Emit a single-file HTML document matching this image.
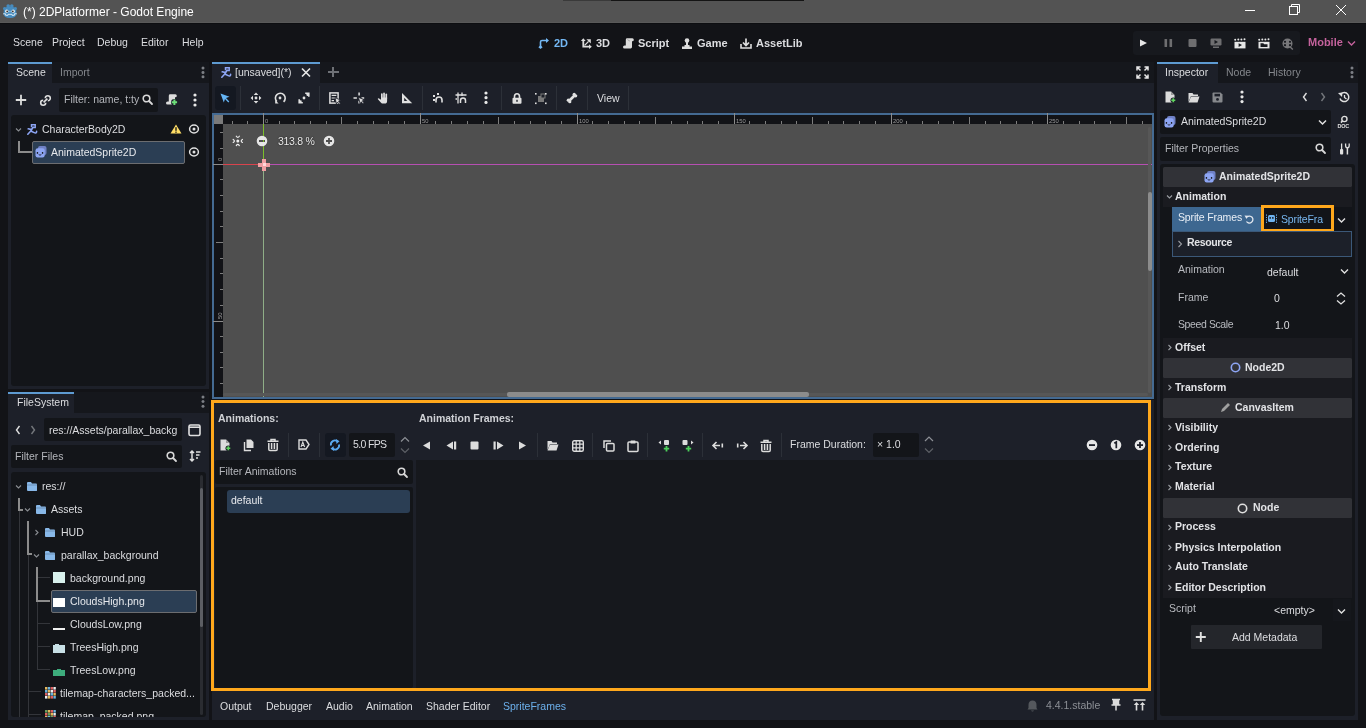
<!DOCTYPE html>
<html><head><meta charset="utf-8">
<style>
*{margin:0;padding:0;box-sizing:border-box}
html,body{width:1366px;height:728px;overflow:hidden;background:#121317;font-family:"Liberation Sans",sans-serif;font-size:10.5px;color:#dcdde0}
.a{position:absolute}
.t{position:absolute;white-space:nowrap;line-height:1;will-change:transform}
svg{position:absolute;overflow:visible;will-change:transform}
</style></head><body>
<div class="a" style="left:0px;top:0px;width:1366px;height:23px;background:#535353;"></div>
<div class="a" style="left:0px;top:22px;width:1366px;height:1px;background:#595959;"></div>
<div class="a" style="left:0px;top:23px;width:1366px;height:1px;background:#0d0e11;"></div>
<div class="a" style="left:563px;top:0px;width:48px;height:1px;background:#3a3a3a;"></div>
<div class="a" style="left:611px;top:0px;width:193px;height:1px;background:#141414;"></div>
<svg style="left:3px;top:4px;" width="14" height="14" viewBox="0 0 14 14"><circle cx="5.2" cy="2" r="1.8" fill="#478cbf"/><circle cx="8.8" cy="2" r="1.8" fill="#478cbf"/><circle cx="1.5" cy="4.5" r="1.5" fill="#478cbf"/><circle cx="12.5" cy="4.5" r="1.5" fill="#478cbf"/><path d="M1 4 Q7 1.5 13 4 L13.5 10 Q13 14 7 14 Q1 14 0.5 10 Z" fill="#478cbf"/><circle cx="3.8" cy="7.2" r="1.7" fill="#e8eef2"/><circle cx="10.2" cy="7.2" r="1.7" fill="#e8eef2"/><circle cx="4.2" cy="7.4" r=".9" fill="#3a3430"/><circle cx="9.8" cy="7.4" r=".9" fill="#3a3430"/><circle cx="7" cy="7.5" r=".8" fill="#9cc4e4"/><path d="M0.2 9.8 H2.6 V11.3 H5 V10.3 H9 V11.3 H11.4 V9.8 H13.8" fill="none" stroke="#d8e8f4" stroke-width="1"/></svg>
<div class="t" style="left:23px;top:6.04px;font-size:12px;color:#ffffff;">(*) 2DPlatformer - Godot Engine</div>
<div class="a" style="left:1245px;top:10px;width:10px;height:1px;background:#ffffff;"></div>
<svg style="left:1289px;top:4px;" width="12" height="12" viewBox="0 0 12 12"><path d="M2.5 2.5 V0.5 H10.5 V8.5 H9" fill="none" stroke="#fff" stroke-width="1"/><rect x="0.5" y="2.5" width="8" height="8" fill="none" stroke="#fff" stroke-width="1"/></svg>
<svg style="left:1335px;top:4px;" width="12" height="12" viewBox="0 0 12 12"><path d="M1 1 L11 11 M11 1 L1 11" stroke="#fff" stroke-width="1"/></svg>
<div class="t" style="left:13px;top:37.21px;font-size:10.5px;color:#dcdde0;">Scene</div>
<div class="t" style="left:52px;top:37.21px;font-size:10.5px;color:#dcdde0;">Project</div>
<div class="t" style="left:97px;top:37.21px;font-size:10.5px;color:#dcdde0;">Debug</div>
<div class="t" style="left:141px;top:37.21px;font-size:10.5px;color:#dcdde0;">Editor</div>
<div class="t" style="left:182px;top:37.21px;font-size:10.5px;color:#dcdde0;">Help</div>
<svg style="left:538px;top:38px;" width="12" height="11" viewBox="0 0 12 11"><path d="M2.5 9 V4 Q2.5 2.5 4 2.5 H9.5" fill="none" stroke="#74b8f4" stroke-width="1.6"/><path d="M8 0 L11 2.5 L8 5 Z" fill="#74b8f4"/><path d="M2.5 7.2 L4.6 9.3 L2.5 11 L0.4 9.3 Z" fill="#74b8f4"/></svg>
<div class="t" style="left:553.5px;top:38.29px;font-size:11px;color:#74b8f4;font-weight:bold;">2D</div>
<svg style="left:580.5px;top:37.5px;" width="11" height="11" viewBox="0 0 11 11"><path d="M2.3 2.5 V8.7 H8.5" fill="none" stroke="#dcdcdc" stroke-width="1.8"/><path d="M2.3 0.2 L4.7 3 H-0.1 Z M10.8 8.7 L8 11.1 V6.3 Z M9.8 1.2 V5.6 L5.4 1.2 Z" fill="#dcdcdc"/><path d="M3.6 7.4 L7.6 3.4" stroke="#dcdcdc" stroke-width="1.3"/></svg>
<div class="t" style="left:595.5px;top:38.29px;font-size:11px;color:#dcdde0;font-weight:bold;">3D</div>
<svg style="left:622.5px;top:37.8px;" width="11" height="11" viewBox="0 0 11 11"><path d="M4.2 0.3 H9.4 Q10.8 0.3 10.8 1.8 Q10.8 3.3 9.3 3.3 H9 V9 Q9 10.4 7.6 10.4 H1.5 Q0 10.4 0 8.9 Q0 7.4 1.5 7.4 H2.8 V1.7 Q2.8 0.3 4.2 0.3 Z" fill="#dcdcdc"/><path d="M4.6 1.2 Q5 3 7 3" fill="none" stroke="#9a9a9a" stroke-width=".7"/></svg>
<div class="t" style="left:637.5px;top:38.29px;font-size:11px;color:#dcdde0;font-weight:bold;">Script</div>
<svg style="left:681px;top:38px;" width="12" height="11" viewBox="0 0 12 11"><circle cx="6" cy="2.5" r="2.3" fill="#dcdcdc"/><rect x="5" y="4" width="2" height="4" fill="#dcdcdc"/><path d="M3.5 7 H8.5 V8.5 H11 V11 H1 V8.5 H3.5 Z" fill="#dcdcdc"/></svg>
<div class="t" style="left:697px;top:38.29px;font-size:11px;color:#dcdde0;font-weight:bold;">Game</div>
<svg style="left:740px;top:38px;" width="12" height="11" viewBox="0 0 12 11"><path d="M6 0.5 V7 M3 4.5 L6 7.5 L9 4.5" fill="none" stroke="#dcdcdc" stroke-width="1.7"/><path d="M1 6 V10 H11 V6" fill="none" stroke="#dcdcdc" stroke-width="1.6"/></svg>
<div class="t" style="left:755.5px;top:38.29px;font-size:11px;color:#dcdde0;font-weight:bold;">AssetLib</div>
<div class="a" style="left:1133px;top:31px;width:167px;height:24px;background:#17191e;border-radius:3px"></div>
<svg style="left:1139px;top:39px;" width="9" height="8" viewBox="0 0 9 8"><path d="M1 0.5 L8 4 L1 7.5 Z" fill="#e6e6e6"/></svg>
<svg style="left:1164px;top:39px;" width="9" height="8" viewBox="0 0 9 8"><rect x="0.5" y="0" width="2.6" height="8" rx=".6" fill="#6e6e70"/><rect x="5.5" y="0" width="2.6" height="8" rx=".6" fill="#6e6e70"/></svg>
<svg style="left:1188px;top:39px;" width="9" height="8" viewBox="0 0 9 8"><rect x="0.5" y="0" width="8" height="8" rx="1" fill="#6e6e70"/></svg>
<svg style="left:1210px;top:38px;" width="12" height="10" viewBox="0 0 12 10"><rect x="0.5" y="0.5" width="11" height="7" rx="1.2" fill="#6e6e70"/><path d="M4.5 2 L8 4 L4.5 6 Z" fill="#17191e"/><rect x="3" y="8.5" width="6" height="1.5" fill="#6e6e70"/></svg>
<svg style="left:1234px;top:38px;" width="12" height="11" viewBox="0 0 12 11"><circle cx="1.2" cy="1.8" r="1" fill="#e6e6e6"/><circle cx="4.3" cy="1.5" r="1" fill="#e6e6e6"/><circle cx="7.4" cy="1.5" r="1" fill="#e6e6e6"/><circle cx="10.5" cy="1.2" r="1" fill="#e6e6e6"/><rect x="0.5" y="3.8" width="11" height="6.6" fill="#e6e6e6"/><path d="M4.6 5.3 L8 7.1 L4.6 8.9 Z" fill="#17191e"/></svg>
<svg style="left:1258px;top:38px;" width="12" height="11" viewBox="0 0 12 11"><circle cx="1.2" cy="1.8" r="1" fill="#e6e6e6"/><circle cx="4.3" cy="1.5" r="1" fill="#e6e6e6"/><circle cx="7.4" cy="1.5" r="1" fill="#e6e6e6"/><circle cx="10.5" cy="1.2" r="1" fill="#e6e6e6"/><rect x="0.5" y="3.8" width="11" height="6.6" fill="#e6e6e6"/><path d="M2.5 5.2 H5.3 L6.2 6.2 H9.5 V9 H2.5 Z" fill="#17191e"/></svg>
<svg style="left:1282px;top:38px;" width="12" height="12" viewBox="0 0 12 12"><circle cx="5.5" cy="5.5" r="5" fill="#77777a"/><circle cx="3" cy="3.8" r="1.1" fill="#17191e"/><circle cx="3" cy="7.2" r="1.1" fill="#17191e"/><circle cx="8" cy="3.8" r="1.1" fill="#17191e"/><circle cx="8" cy="7.2" r="1.1" fill="#17191e"/><path d="M8.2 9 L10.8 11.6" stroke="#77777a" stroke-width="1.4"/></svg>
<div class="t" style="left:1307.5px;top:37.29px;font-size:11px;color:#c4629c;font-weight:bold;">Mobile</div>
<svg style="left:1346.5px;top:40px;" width="9" height="6" viewBox="0 0 9 6"><path d="M1 1.5 L4.5 5.0 L8 1.5" fill="none" stroke="#c4629c" stroke-width="1.4"/></svg>
<div class="a" style="left:8px;top:62px;width:201px;height:21px;background:#15171c;"></div>
<div class="a" style="left:8px;top:62px;width:44px;height:21px;background:#1d2029;"></div>
<div class="a" style="left:8px;top:62px;width:44px;height:2px;background:#5e9bd2;"></div>
<div class="t" style="left:16px;top:67.41px;font-size:10.5px;color:#dcdde0;">Scene</div>
<div class="t" style="left:60px;top:67.41px;font-size:10.5px;color:#84878c;">Import</div>
<svg style="left:200px;top:64.6px;" width="6" height="14.8" viewBox="0 0 6 14.8"><circle cx="3" cy="3.0" r="1.5" fill="#7c7f85"/><circle cx="3" cy="7.4" r="1.5" fill="#7c7f85"/><circle cx="3" cy="11.8" r="1.5" fill="#7c7f85"/></svg>
<div class="a" style="left:8px;top:83px;width:201px;height:306px;background:#1d2029;"></div>
<svg style="left:15px;top:94px;" width="12" height="12" viewBox="0 0 12 12"><path d="M0.8 6 H11.2 M6 0.8 V11.2" stroke="#dcdcdc" stroke-width="1.8"/></svg>
<svg style="left:39.5px;top:94.5px;" width="11" height="11" viewBox="0 0 11 11"><path d="M5.3 3.2 A2.5 2.5 0 1 1 7.8 5.7 M5.7 7.8 A2.5 2.5 0 1 1 3.2 5.3 M3.6 7.4 L7.4 3.6" fill="none" stroke="#e0e0e0" stroke-width="1.6"/></svg>
<div class="a" style="left:59px;top:88px;width:99px;height:24px;background:#131519;border-radius:2px"></div>
<div class="t" style="left:63.5px;top:94.41px;font-size:10.5px;color:#b4b6bb;">Filter: name, t:ty</div>
<svg style="left:142px;top:94px;" width="11" height="11" viewBox="0 0 11 11"><circle cx="4.5" cy="4.5" r="3.3" fill="none" stroke="#d8d8d8" stroke-width="1.6"/><path d="M7 7 L10 10" stroke="#d8d8d8" stroke-width="1.8" stroke-linecap="round"/></svg>
<svg style="left:165.7px;top:94.4px;" width="11" height="11" viewBox="0 0 11 11"><path d="M4.2 0.3 H9.4 Q10.8 0.3 10.8 1.8 Q10.8 3.3 9.3 3.3 H9 V9 Q9 10.4 7.6 10.4 H1.5 Q0 10.4 0 8.9 Q0 7.4 1.5 7.4 H2.8 V1.7 Q2.8 0.3 4.2 0.3 Z" fill="#dcdcdc"/><circle cx="8.4" cy="8.3" r="3.4" fill="#1d2029"/><path d="M8.4 5.6 V11 M5.7 8.3 H11.1" stroke="#6ee07a" stroke-width="2"/></svg>
<svg style="left:192px;top:92px;" width="6" height="16" viewBox="0 0 6 16"><circle cx="3" cy="3" r="1.6" fill="#e8e8e8"/><circle cx="3" cy="8" r="1.6" fill="#e8e8e8"/><circle cx="3" cy="13" r="1.6" fill="#e8e8e8"/></svg>
<div class="a" style="left:11px;top:115px;width:195px;height:271px;background:#131519;border-radius:3px"></div>
<svg style="left:15.0px;top:127px;" width="7" height="6" viewBox="0 0 7 6"><path d="M1 1.5 L3.5 4.0 L6 1.5" fill="none" stroke="#8a8d92" stroke-width="1.1"/></svg>
<svg style="left:27px;top:124px;" width="11" height="11" viewBox="0 0 11 11"><path d="M4.5 3.2 V0.8 H8.2 V3.5 H6" fill="none" stroke="#8da5f3" stroke-width="1.5"/><path d="M6 3.2 L3.8 7 M1.2 4.8 L4.8 5.6 M3.8 7 L0.8 10.2 M4.3 7.2 L7.2 8.6 Q9.6 9.8 9.6 7.2" fill="none" stroke="#8da5f3" stroke-width="1.6" stroke-linecap="round"/></svg>
<div class="t" style="left:42.2px;top:124.21px;font-size:10.5px;color:#dcdde0;">CharacterBody2D</div>
<svg style="left:170px;top:124px;" width="12" height="10" viewBox="0 0 12 10"><path d="M6 0.5 L11.5 9.5 H0.5 Z" fill="#ffdd65"/><rect x="5.3" y="3.2" width="1.4" height="3.6" fill="#1a1a1a"/><rect x="5.3" y="7.6" width="1.4" height="1.2" fill="#1a1a1a"/></svg>
<svg style="left:188px;top:124px;" width="12" height="10" viewBox="0 0 12 10"><ellipse cx="6" cy="5" rx="4.4" ry="3.9" fill="none" stroke="#e0e0e0" stroke-width="1.5"/><circle cx="6" cy="5" r="1.5" fill="#e0e0e0"/></svg>
<div class="a" style="left:18px;top:141px;width:2px;height:12px;background:#8c8c8c;"></div>
<div class="a" style="left:18px;top:151px;width:14px;height:2px;background:#8c8c8c;"></div>
<div class="a" style="left:32px;top:141px;width:153px;height:23px;background:#2b3e54;border:1px solid #6c6d70;border-radius:2px"></div>
<svg style="left:35px;top:146px;" width="12" height="12" viewBox="0 0 12 12"><rect x="3" y="0" width="8.5" height="9" rx="2" fill="#6f80c4"/><rect x="0.5" y="2.3" width="9.2" height="9.2" rx="2.2" fill="#8da5f3"/><rect x="1.8" y="6" width="1.3" height="1.8" fill="#1d2029"/><rect x="6.9" y="6" width="1.3" height="1.8" fill="#1d2029"/><path d="M3.2 8.6 Q5 10.6 6.8 8.6 Z" fill="#1d2029"/></svg>
<div class="t" style="left:51px;top:147.21px;font-size:10.5px;color:#e6e8ec;">AnimatedSprite2D</div>
<svg style="left:188px;top:147px;" width="12" height="10" viewBox="0 0 12 10"><ellipse cx="6" cy="5" rx="4.4" ry="3.9" fill="none" stroke="#e0e0e0" stroke-width="1.5"/><circle cx="6" cy="5" r="1.5" fill="#e0e0e0"/></svg>
<div class="a" style="left:8px;top:392px;width:201px;height:21px;background:#15171c;"></div>
<div class="a" style="left:8px;top:392px;width:66px;height:21px;background:#1d2029;"></div>
<div class="a" style="left:8px;top:392px;width:66px;height:2px;background:#5e9bd2;"></div>
<div class="t" style="left:16.5px;top:397.11px;font-size:10.5px;color:#dcdde0;">FileSystem</div>
<svg style="left:200px;top:394.4px;" width="6" height="15.2" viewBox="0 0 6 15.2"><circle cx="3" cy="3.0" r="1.5" fill="#7c7f85"/><circle cx="3" cy="7.6" r="1.5" fill="#7c7f85"/><circle cx="3" cy="12.2" r="1.5" fill="#7c7f85"/></svg>
<div class="a" style="left:8px;top:413px;width:201px;height:307px;background:#1d2029;"></div>
<svg style="left:15px;top:425px;" width="6" height="10" viewBox="0 0 6 10"><path d="M4.5 1 L1.5 5 L4.5 9" fill="none" stroke="#e0e0e0" stroke-width="1.4"/></svg>
<svg style="left:30px;top:425px;" width="6" height="10" viewBox="0 0 6 10"><path d="M1.5 1 L4.5 5 L1.5 9" fill="none" stroke="#74777c" stroke-width="1.4"/></svg>
<div class="a" style="left:44px;top:418px;width:138px;height:23px;background:#131519;border-radius:2px"></div>
<div class="t" style="left:48.5px;top:425.01px;font-size:10.5px;color:#dcdde0;">res://Assets/parallax_backg</div>
<svg style="left:188px;top:424px;" width="13" height="13" viewBox="0 0 13 13"><rect x="1" y="1" width="11" height="10.5" rx="1.5" fill="none" stroke="#e0e0e0" stroke-width="1.6"/><path d="M1 3.2 H12" stroke="#e0e0e0" stroke-width="1.6"/></svg>
<div class="a" style="left:11px;top:445px;width:171px;height:23px;background:#131519;border-radius:2px"></div>
<div class="t" style="left:15.4px;top:451.21px;font-size:10.5px;color:#b4b6bb;">Filter Files</div>
<svg style="left:165.5px;top:451px;" width="11" height="11" viewBox="0 0 11 11"><circle cx="4.5" cy="4.5" r="3.3" fill="none" stroke="#d8d8d8" stroke-width="1.6"/><path d="M7 7 L10 10" stroke="#d8d8d8" stroke-width="1.8" stroke-linecap="round"/></svg>
<svg style="left:189px;top:450px;" width="12" height="13" viewBox="0 0 12 13"><path d="M3 1 V11 M1 3 L3 1 L5 3 M1 9 L3 11 L5 9" fill="none" stroke="#e0e0e0" stroke-width="1.5"/><path d="M7 2 H11.5 M7 5 H10.5 M7 8 H9" stroke="#e0e0e0" stroke-width="1.4"/></svg>
<div class="a" style="left:11px;top:472px;width:195px;height:245px;background:#131519;border-radius:3px"></div>
<div class="a" style="left:200px;top:475px;width:3px;height:240px;background:#2a2c31;border-radius:2px"></div>
<div class="a" style="left:200px;top:488px;width:3px;height:139px;background:#5c5e63;border-radius:2px"></div>
<svg style="left:15.0px;top:483.5px;" width="7" height="6" viewBox="0 0 7 6"><path d="M1 1.5 L3.5 4.0 L6 1.5" fill="none" stroke="#8a8d92" stroke-width="1.1"/></svg>
<svg style="left:27px;top:482px;" width="10" height="9" viewBox="0 0 10 9"><path d="M0 1 Q0 0 1 0 H4 L5 1.5 H9 Q10 1.5 10 2.5 V8.5 Q10 9 9 9 H1 Q0 9 0 8 Z" fill="#88b8e8"/><path d="M0 3 H10" stroke="#131519" stroke-width=".6" opacity=".4"/></svg>
<div class="t" style="left:42px;top:481.11px;font-size:10.5px;color:#dcdde0;">res://</div>
<div class="a" style="left:18px;top:498px;width:2px;height:13px;background:#8c8c8c;"></div>
<div class="a" style="left:18px;top:509px;width:5px;height:2px;background:#8c8c8c;"></div>
<svg style="left:24.0px;top:507px;" width="7" height="6" viewBox="0 0 7 6"><path d="M1 1.5 L3.5 4.0 L6 1.5" fill="none" stroke="#8a8d92" stroke-width="1.1"/></svg>
<svg style="left:36px;top:505px;" width="10" height="9" viewBox="0 0 10 9"><path d="M0 1 Q0 0 1 0 H4 L5 1.5 H9 Q10 1.5 10 2.5 V8.5 Q10 9 9 9 H1 Q0 9 0 8 Z" fill="#88b8e8"/><path d="M0 3 H10" stroke="#131519" stroke-width=".6" opacity=".4"/></svg>
<div class="t" style="left:51px;top:503.81px;font-size:10.5px;color:#dcdde0;">Assets</div>
<div class="a" style="left:18.5px;top:511px;width:1px;height:206px;background:#33353a;"></div>
<svg style="left:33.5px;top:528.5px;" width="6" height="7" viewBox="0 0 6 7"><path d="M1.5 1 L4.0 3.5 L1.5 6" fill="none" stroke="#8a8d92" stroke-width="1.1"/></svg>
<svg style="left:45px;top:528px;" width="10" height="9" viewBox="0 0 10 9"><path d="M0 1 Q0 0 1 0 H4 L5 1.5 H9 Q10 1.5 10 2.5 V8.5 Q10 9 9 9 H1 Q0 9 0 8 Z" fill="#88b8e8"/><path d="M0 3 H10" stroke="#131519" stroke-width=".6" opacity=".4"/></svg>
<div class="t" style="left:60.5px;top:527.11px;font-size:10.5px;color:#dcdde0;">HUD</div>
<div class="a" style="left:27px;top:521px;width:2px;height:34px;background:#8c8c8c;"></div>
<div class="a" style="left:27px;top:553px;width:5px;height:2px;background:#8c8c8c;"></div>
<svg style="left:32.5px;top:552.5px;" width="7" height="6" viewBox="0 0 7 6"><path d="M1 1.5 L3.5 4.0 L6 1.5" fill="none" stroke="#8a8d92" stroke-width="1.1"/></svg>
<svg style="left:45px;top:551px;" width="10" height="9" viewBox="0 0 10 9"><path d="M0 1 Q0 0 1 0 H4 L5 1.5 H9 Q10 1.5 10 2.5 V8.5 Q10 9 9 9 H1 Q0 9 0 8 Z" fill="#88b8e8"/><path d="M0 3 H10" stroke="#131519" stroke-width=".6" opacity=".4"/></svg>
<div class="t" style="left:60.5px;top:550.41px;font-size:10.5px;color:#dcdde0;">parallax_background</div>
<div class="a" style="left:27.5px;top:555px;width:1px;height:162px;background:#33353a;"></div>
<div class="a" style="left:36px;top:567px;width:2px;height:35px;background:#8c8c8c;"></div>
<div class="a" style="left:36px;top:600px;width:14px;height:2px;background:#8c8c8c;"></div>
<div class="a" style="left:37px;top:602px;width:1px;height:68px;background:#33353a;"></div>
<div class="a" style="left:38px;top:577px;width:12px;height:1px;background:#33353a;"></div>
<div class="a" style="left:38px;top:623px;width:12px;height:1px;background:#33353a;"></div>
<div class="a" style="left:38px;top:646px;width:12px;height:1px;background:#33353a;"></div>
<div class="a" style="left:38px;top:669px;width:12px;height:1px;background:#33353a;"></div>
<div class="a" style="left:51px;top:590px;width:146px;height:23px;background:#2b3e54;border:1px solid #6c6d70;border-radius:2px"></div>
<div class="a" style="left:53px;top:572px;width:12px;height:11px;background:#d8f0ec;"></div>
<div class="a" style="left:53px;top:598px;width:12px;height:9px;background:#ffffff;"></div>
<div class="a" style="left:53px;top:628px;width:12px;height:2px;background:#f0f0f0;"></div>
<div class="a" style="left:53px;top:645px;width:12px;height:8px;background:#c8e0e6;"></div>
<div class="a" style="left:55px;top:644px;width:4px;height:2px;background:#c8e0e6;"></div>
<div class="a" style="left:53px;top:670px;width:12px;height:6px;background:#3dac7c;"></div>
<div class="a" style="left:57px;top:669px;width:4px;height:2px;background:#3dac7c;"></div>
<div class="t" style="left:69.7px;top:573.41px;font-size:10.5px;color:#dcdde0;">background.png</div>
<div class="t" style="left:69.7px;top:596.11px;font-size:10.5px;color:#e6e8ec;">CloudsHigh.png</div>
<div class="t" style="left:69.7px;top:619.31px;font-size:10.5px;color:#dcdde0;">CloudsLow.png</div>
<div class="t" style="left:69.7px;top:642.11px;font-size:10.5px;color:#dcdde0;">TreesHigh.png</div>
<div class="t" style="left:69.7px;top:665.31px;font-size:10.5px;color:#dcdde0;">TreesLow.png</div>
<div class="a" style="left:28px;top:691px;width:13px;height:1px;background:#33353a;"></div>
<div class="a" style="left:28px;top:714px;width:13px;height:1px;background:#33353a;"></div>
<svg style="left:45px;top:687px;" width="11" height="12" viewBox="0 0 11 12"><rect x="0.0" y="0" width="2.4" height="2.6" fill="#e6b85c"/><rect x="2.8" y="0" width="2.4" height="2.6" fill="#6cb4e0"/><rect x="5.6" y="0" width="2.4" height="2.6" fill="#e06060"/><rect x="8.399999999999999" y="0" width="2.4" height="2.6" fill="#f0f0f0"/><rect x="0.0" y="3" width="2.4" height="2.6" fill="#6cb4e0"/><rect x="2.8" y="3" width="2.4" height="2.6" fill="#e6b85c"/><rect x="5.6" y="3" width="2.4" height="2.6" fill="#f0f0f0"/><rect x="8.399999999999999" y="3" width="2.4" height="2.6" fill="#e06060"/><rect x="0.0" y="6" width="2.4" height="2.6" fill="#e06060"/><rect x="2.8" y="6" width="2.4" height="2.6" fill="#f0f0f0"/><rect x="5.6" y="6" width="2.4" height="2.6" fill="#6cb4e0"/><rect x="8.399999999999999" y="6" width="2.4" height="2.6" fill="#e6b85c"/><rect x="0.0" y="9" width="2.4" height="2.6" fill="#f0f0f0"/><rect x="2.8" y="9" width="2.4" height="2.6" fill="#e6b85c"/><rect x="5.6" y="9" width="2.4" height="2.6" fill="#e06060"/><rect x="8.399999999999999" y="9" width="2.4" height="2.6" fill="#6cb4e0"/></svg>
<div class="t" style="left:60px;top:687.81px;font-size:10.5px;color:#dcdde0;">tilemap-characters_packed...</div>
<div class="a" style="left:11px;top:705px;width:189px;height:12px;overflow:hidden">
<svg style="left:34px;top:5px;" width="11" height="12" viewBox="0 0 11 12"><rect x="0.0" y="0" width="2.4" height="2.6" fill="#6ca060"/><rect x="2.8" y="0" width="2.4" height="2.6" fill="#e6b85c"/><rect x="5.6" y="0" width="2.4" height="2.6" fill="#e06060"/><rect x="8.399999999999999" y="0" width="2.4" height="2.6" fill="#6cb4e0"/><rect x="0.0" y="3" width="2.4" height="2.6" fill="#e06060"/><rect x="2.8" y="3" width="2.4" height="2.6" fill="#6ca060"/><rect x="5.6" y="3" width="2.4" height="2.6" fill="#e6b85c"/><rect x="8.399999999999999" y="3" width="2.4" height="2.6" fill="#f0f0f0"/><rect x="0.0" y="6" width="2.4" height="2.6" fill="#e6b85c"/><rect x="2.8" y="6" width="2.4" height="2.6" fill="#6cb4e0"/><rect x="5.6" y="6" width="2.4" height="2.6" fill="#6ca060"/><rect x="8.399999999999999" y="6" width="2.4" height="2.6" fill="#e06060"/><rect x="0.0" y="9" width="2.4" height="2.6" fill="#6cb4e0"/><rect x="2.8" y="9" width="2.4" height="2.6" fill="#e06060"/><rect x="5.6" y="9" width="2.4" height="2.6" fill="#f0f0f0"/><rect x="8.399999999999999" y="9" width="2.4" height="2.6" fill="#6ca060"/></svg>
<div class="t" style="left:49px;top:6.11px;font-size:10.5px;color:#dcdde0;">tilemap_packed.png</div>
</div>
<div class="a" style="left:212px;top:62px;width:942px;height:21px;background:#15171c;"></div>
<div class="a" style="left:212px;top:62px;width:108px;height:21px;background:#1d2029;"></div>
<div class="a" style="left:212px;top:62px;width:108px;height:2px;background:#5e9bd2;"></div>
<svg style="left:220.5px;top:67px;" width="11" height="11" viewBox="0 0 11 11"><path d="M4.5 3.2 V0.8 H8.2 V3.5 H6" fill="none" stroke="#8da5f3" stroke-width="1.5"/><path d="M6 3.2 L3.8 7 M1.2 4.8 L4.8 5.6 M3.8 7 L0.8 10.2 M4.3 7.2 L7.2 8.6 Q9.6 9.8 9.6 7.2" fill="none" stroke="#8da5f3" stroke-width="1.6" stroke-linecap="round"/></svg>
<div class="t" style="left:235.3px;top:67.11px;font-size:10.5px;color:#dcdde0;">[unsaved](*)</div>
<svg style="left:301px;top:68px;" width="10" height="9" viewBox="0 0 10 9"><path d="M1 0.5 L9 8.5 M9 0.5 L1 8.5" stroke="#e8e8e8" stroke-width="1.6"/></svg>
<div class="a" style="left:327.5px;top:71.3px;width:11px;height:1.5px;background:#6e7176;"></div>
<div class="a" style="left:332.3px;top:66.8px;width:1.5px;height:10.5px;background:#6e7176;"></div>
<svg style="left:1136px;top:66px;" width="13" height="13" viewBox="0 0 13 13"><path d="M1 4.5 V1 H4.5 M8.5 1 H12 V4.5 M12 8.5 V12 H8.5 M4.5 12 H1 V8.5 M1 1 L4.5 4.5 M12 1 L8.5 4.5 M12 12 L8.5 8.5 M1 12 L4.5 8.5" fill="none" stroke="#e8e8e8" stroke-width="1.5"/></svg>
<div class="a" style="left:212px;top:83px;width:942px;height:30px;background:#1d2029;"></div>
<div class="a" style="left:215px;top:86px;width:21px;height:24px;background:#141821;border-radius:3px"></div>
<svg style="left:220px;top:93px;" width="10" height="10" viewBox="0 0 10 10"><path d="M0.5 0.5 L9.5 3.8 L6 5 L9.3 8.5 L8.3 9.5 L5 6 L3.8 9.5 Z" fill="#65b5f5"/></svg>
<div class="a" style="left:240px;top:86px;width:1px;height:24px;background:#2c3038;"></div>
<div class="a" style="left:319px;top:86px;width:1px;height:24px;background:#2c3038;"></div>
<div class="a" style="left:422px;top:86px;width:1px;height:24px;background:#2c3038;"></div>
<div class="a" style="left:501px;top:86px;width:1px;height:24px;background:#2c3038;"></div>
<div class="a" style="left:556px;top:86px;width:1px;height:24px;background:#2c3038;"></div>
<div class="a" style="left:587px;top:86px;width:1px;height:24px;background:#2c3038;"></div>
<div class="a" style="left:628px;top:86px;width:1px;height:24px;background:#2c3038;"></div>
<svg style="left:250px;top:92px;" width="12" height="12" viewBox="0 0 12 12"><path d="M6 0.6 L8.3 3 H3.7 Z M6 11.4 L8.3 9 H3.7 Z M0.6 6 L3 3.7 V8.3 Z M11.4 6 L9 3.7 V8.3 Z" fill="#e0e0e0"/><circle cx="6" cy="6" r="1.4" fill="#e0e0e0"/></svg>
<svg style="left:274px;top:92px;" width="12" height="12" viewBox="0 0 12 12"><path d="M2.8 9.6 A4.9 4.9 0 1 1 9.6 9.8" fill="none" stroke="#e0e0e0" stroke-width="1.6"/><path d="M1.2 8 V11.4 H4.6 Z" fill="#e0e0e0"/><circle cx="6" cy="6" r="1.4" fill="#e0e0e0"/></svg>
<svg style="left:298px;top:92px;" width="12" height="12" viewBox="0 0 12 12"><path d="M7.2 1.2 H10.8 V4.8 M4.8 10.8 H1.2 V7.2 M10.8 1.2 L8.6 3.4 M1.2 10.8 L3.4 8.6" fill="none" stroke="#e0e0e0" stroke-width="1.6"/><circle cx="6" cy="6" r="1.4" fill="#e0e0e0"/></svg>
<svg style="left:329px;top:92px;" width="12" height="12" viewBox="0 0 12 12"><rect x="0.9" y="0.9" width="8.2" height="10.2" fill="none" stroke="#e0e0e0" stroke-width="1.5"/><path d="M2.6 3.4 H7.4 M2.6 6 H7.4 M2.6 8.6 H5" stroke="#e0e0e0" stroke-width="1.1"/><path d="M6 5.6 L11.8 8.2 L9.5 9 L11.3 11.2 L10.2 12.2 L8.5 10 L7.4 12 Z" fill="#e0e0e0" stroke="#1d2029" stroke-width=".8"/></svg>
<svg style="left:353px;top:92px;" width="12" height="12" viewBox="0 0 12 12"><path d="M6.1 0.5 V3.6 M0.5 5.9 H3.9 M6.1 8.8 V11.5 M8.5 5.9 H11.2" stroke="#e0e0e0" stroke-width="1.5"/><path d="M5.4 5.2 L11.6 8 L9.3 8.8 L11.1 11 L10 12 L8.3 9.8 L7.2 11.8 Z" fill="#e0e0e0" stroke="#1d2029" stroke-width=".8"/></svg>
<svg style="left:377px;top:92px;" width="12" height="12" viewBox="0 0 12 12"><rect x="4" y="1.2" width="1.7" height="6" rx=".85" fill="#e0e0e0"/><rect x="6.2" y="0.6" width="1.7" height="6" rx=".85" fill="#e0e0e0"/><rect x="8.4" y="1.6" width="1.7" height="6" rx=".85" fill="#e0e0e0"/><path d="M4 5.5 H10.1 V9 Q10.1 11.6 7.5 11.6 H6.3 Q4.8 11.6 3.8 10.4 L0.9 7.2 Q0.5 6.3 1.5 6.2 Q2.3 6.2 4 7.8 Z" fill="#e0e0e0"/></svg>
<svg style="left:401px;top:92px;" width="12" height="12" viewBox="0 0 12 12"><path d="M1 1 V11.2 H11.2 Z" fill="#e0e0e0"/><path d="M3.2 5.8 V8.9 H6.3 Z" fill="#1d2029"/></svg>
<svg style="left:433px;top:93px;" width="11" height="11" viewBox="0 0 11 11"><path d="M3 9.5 V7 Q3 4 6 4 Q9 4 9 7 V9.5" fill="none" stroke="#e0e0e0" stroke-width="1.6"/><rect x="0" y="2" width="2" height="2" fill="#e0e0e0"/><rect x="0" y="6" width="2" height="2" fill="#e0e0e0"/><rect x="4" y="0" width="2" height="2" fill="#e0e0e0"/></svg>
<svg style="left:455px;top:92px;" width="12" height="12" viewBox="0 0 12 12"><path d="M3 0.5 V11.5 M7 0.5 V4 M0.5 3 H11.5 M0.5 7 H2 " fill="none" stroke="#e0e0e0" stroke-width="1.3"/><path d="M5.5 11 V8.5 Q5.5 6 8 6 Q10.5 6 10.5 8.5 V11" fill="none" stroke="#e0e0e0" stroke-width="1.5"/></svg>
<svg style="left:482.7px;top:90.3px;" width="6" height="15.4" viewBox="0 0 6 15.4"><circle cx="3" cy="3.0" r="1.6" fill="#e8e8e8"/><circle cx="3" cy="7.7" r="1.6" fill="#e8e8e8"/><circle cx="3" cy="12.4" r="1.6" fill="#e8e8e8"/></svg>
<svg style="left:512px;top:93px;" width="10" height="11" viewBox="0 0 10 11"><path d="M2.5 5 V3.5 Q2.5 0.8 5 0.8 Q7.5 0.8 7.5 3.5 V5" fill="none" stroke="#e0e0e0" stroke-width="1.6"/><rect x="0.5" y="4.8" width="9" height="6" rx="1" fill="#e0e0e0"/><rect x="4.3" y="6.8" width="1.4" height="2" fill="#1d2029"/></svg>
<svg style="left:535px;top:93px;" width="12" height="11" viewBox="0 0 12 11"><rect x="3" y="3" width="6" height="6" fill="#7a7a7a"/><rect x="6" y="1" width="4" height="4" fill="#1d2029" stroke="#7a7a7a" stroke-width="1"/><rect x="0" y="0" width="1.6" height="1.6" fill="#e0e0e0"/><rect x="10" y="0" width="1.6" height="1.6" fill="#e0e0e0"/><rect x="0" y="9.5" width="1.6" height="1.6" fill="#e0e0e0"/><rect x="10" y="9.5" width="1.6" height="1.6" fill="#e0e0e0"/></svg>
<svg style="left:566px;top:92px;" width="12" height="12" viewBox="0 0 12 12"><path d="M3 9 L9 3" stroke="#e0e0e0" stroke-width="2.6"/><circle cx="2.3" cy="8.2" r="1.6" fill="#e0e0e0"/><circle cx="3.8" cy="9.7" r="1.6" fill="#e0e0e0"/><circle cx="8.2" cy="2.3" r="1.6" fill="#e0e0e0"/><circle cx="9.7" cy="3.8" r="1.6" fill="#e0e0e0"/></svg>
<div class="t" style="left:597px;top:93.11px;font-size:10.5px;color:#dcdde0;">View</div>
<div class="a" style="left:212px;top:113px;width:942px;height:286px;background:#446a92;"></div>
<div class="a" style="left:214px;top:115px;width:938px;height:282px;background:#121317;"></div>
<div class="a" style="left:214px;top:115px;width:9px;height:9px;background:#7a7a7a;"></div>
<div class="a" style="left:223px;top:124px;width:929px;height:273px;background:#4f4f4f;"></div>
<div class="a" style="left:232px;top:121px;width:1px;height:3px;background:#7e7e7e;"></div>
<div class="a" style="left:247px;top:121px;width:1px;height:3px;background:#7e7e7e;"></div>
<div class="a" style="left:263px;top:113px;width:1px;height:11px;background:#8c8c8c;"></div>
<div class="t" style="left:265px;top:118.69px;font-size:5.8px;color:#9a9a9a;">0</div>
<div class="a" style="left:279px;top:121px;width:1px;height:3px;background:#7e7e7e;"></div>
<div class="a" style="left:294px;top:121px;width:1px;height:3px;background:#7e7e7e;"></div>
<div class="a" style="left:310px;top:121px;width:1px;height:3px;background:#7e7e7e;"></div>
<div class="a" style="left:326px;top:121px;width:1px;height:3px;background:#7e7e7e;"></div>
<div class="a" style="left:341px;top:117px;width:1px;height:7px;background:#7e7e7e;"></div>
<div class="a" style="left:357px;top:121px;width:1px;height:3px;background:#7e7e7e;"></div>
<div class="a" style="left:373px;top:121px;width:1px;height:3px;background:#7e7e7e;"></div>
<div class="a" style="left:388px;top:121px;width:1px;height:3px;background:#7e7e7e;"></div>
<div class="a" style="left:404px;top:121px;width:1px;height:3px;background:#7e7e7e;"></div>
<div class="a" style="left:420px;top:113px;width:1px;height:11px;background:#8c8c8c;"></div>
<div class="t" style="left:422px;top:118.69px;font-size:5.8px;color:#9a9a9a;">50</div>
<div class="a" style="left:435px;top:121px;width:1px;height:3px;background:#7e7e7e;"></div>
<div class="a" style="left:451px;top:121px;width:1px;height:3px;background:#7e7e7e;"></div>
<div class="a" style="left:467px;top:121px;width:1px;height:3px;background:#7e7e7e;"></div>
<div class="a" style="left:483px;top:121px;width:1px;height:3px;background:#7e7e7e;"></div>
<div class="a" style="left:498px;top:117px;width:1px;height:7px;background:#7e7e7e;"></div>
<div class="a" style="left:514px;top:121px;width:1px;height:3px;background:#7e7e7e;"></div>
<div class="a" style="left:530px;top:121px;width:1px;height:3px;background:#7e7e7e;"></div>
<div class="a" style="left:545px;top:121px;width:1px;height:3px;background:#7e7e7e;"></div>
<div class="a" style="left:561px;top:121px;width:1px;height:3px;background:#7e7e7e;"></div>
<div class="a" style="left:577px;top:113px;width:1px;height:11px;background:#8c8c8c;"></div>
<div class="t" style="left:579px;top:118.69px;font-size:5.8px;color:#9a9a9a;">100</div>
<div class="a" style="left:592px;top:121px;width:1px;height:3px;background:#7e7e7e;"></div>
<div class="a" style="left:608px;top:121px;width:1px;height:3px;background:#7e7e7e;"></div>
<div class="a" style="left:624px;top:121px;width:1px;height:3px;background:#7e7e7e;"></div>
<div class="a" style="left:639px;top:121px;width:1px;height:3px;background:#7e7e7e;"></div>
<div class="a" style="left:655px;top:117px;width:1px;height:7px;background:#7e7e7e;"></div>
<div class="a" style="left:671px;top:121px;width:1px;height:3px;background:#7e7e7e;"></div>
<div class="a" style="left:687px;top:121px;width:1px;height:3px;background:#7e7e7e;"></div>
<div class="a" style="left:702px;top:121px;width:1px;height:3px;background:#7e7e7e;"></div>
<div class="a" style="left:718px;top:121px;width:1px;height:3px;background:#7e7e7e;"></div>
<div class="a" style="left:734px;top:113px;width:1px;height:11px;background:#8c8c8c;"></div>
<div class="t" style="left:736px;top:118.69px;font-size:5.8px;color:#9a9a9a;">150</div>
<div class="a" style="left:749px;top:121px;width:1px;height:3px;background:#7e7e7e;"></div>
<div class="a" style="left:765px;top:121px;width:1px;height:3px;background:#7e7e7e;"></div>
<div class="a" style="left:781px;top:121px;width:1px;height:3px;background:#7e7e7e;"></div>
<div class="a" style="left:796px;top:121px;width:1px;height:3px;background:#7e7e7e;"></div>
<div class="a" style="left:812px;top:117px;width:1px;height:7px;background:#7e7e7e;"></div>
<div class="a" style="left:828px;top:121px;width:1px;height:3px;background:#7e7e7e;"></div>
<div class="a" style="left:843px;top:121px;width:1px;height:3px;background:#7e7e7e;"></div>
<div class="a" style="left:859px;top:121px;width:1px;height:3px;background:#7e7e7e;"></div>
<div class="a" style="left:875px;top:121px;width:1px;height:3px;background:#7e7e7e;"></div>
<div class="a" style="left:891px;top:113px;width:1px;height:11px;background:#8c8c8c;"></div>
<div class="t" style="left:893px;top:118.69px;font-size:5.8px;color:#9a9a9a;">200</div>
<div class="a" style="left:906px;top:121px;width:1px;height:3px;background:#7e7e7e;"></div>
<div class="a" style="left:922px;top:121px;width:1px;height:3px;background:#7e7e7e;"></div>
<div class="a" style="left:938px;top:121px;width:1px;height:3px;background:#7e7e7e;"></div>
<div class="a" style="left:953px;top:121px;width:1px;height:3px;background:#7e7e7e;"></div>
<div class="a" style="left:969px;top:117px;width:1px;height:7px;background:#7e7e7e;"></div>
<div class="a" style="left:985px;top:121px;width:1px;height:3px;background:#7e7e7e;"></div>
<div class="a" style="left:1000px;top:121px;width:1px;height:3px;background:#7e7e7e;"></div>
<div class="a" style="left:1016px;top:121px;width:1px;height:3px;background:#7e7e7e;"></div>
<div class="a" style="left:1032px;top:121px;width:1px;height:3px;background:#7e7e7e;"></div>
<div class="a" style="left:1047px;top:113px;width:1px;height:11px;background:#8c8c8c;"></div>
<div class="t" style="left:1049px;top:118.69px;font-size:5.8px;color:#9a9a9a;">250</div>
<div class="a" style="left:1063px;top:121px;width:1px;height:3px;background:#7e7e7e;"></div>
<div class="a" style="left:1079px;top:121px;width:1px;height:3px;background:#7e7e7e;"></div>
<div class="a" style="left:1094px;top:121px;width:1px;height:3px;background:#7e7e7e;"></div>
<div class="a" style="left:1110px;top:121px;width:1px;height:3px;background:#7e7e7e;"></div>
<div class="a" style="left:1126px;top:117px;width:1px;height:7px;background:#7e7e7e;"></div>
<div class="a" style="left:1142px;top:121px;width:1px;height:3px;background:#7e7e7e;"></div>
<div class="a" style="left:220px;top:132px;width:3px;height:1px;background:#7e7e7e;"></div>
<div class="a" style="left:220px;top:148px;width:3px;height:1px;background:#7e7e7e;"></div>
<div class="a" style="left:213px;top:164px;width:10px;height:1px;background:#8c8c8c;"></div>
<div class="a" style="left:220px;top:179px;width:3px;height:1px;background:#7e7e7e;"></div>
<div class="a" style="left:220px;top:195px;width:3px;height:1px;background:#7e7e7e;"></div>
<div class="a" style="left:220px;top:211px;width:3px;height:1px;background:#7e7e7e;"></div>
<div class="a" style="left:220px;top:226px;width:3px;height:1px;background:#7e7e7e;"></div>
<div class="a" style="left:216px;top:242px;width:7px;height:1px;background:#7e7e7e;"></div>
<div class="a" style="left:220px;top:258px;width:3px;height:1px;background:#7e7e7e;"></div>
<div class="a" style="left:220px;top:273px;width:3px;height:1px;background:#7e7e7e;"></div>
<div class="a" style="left:220px;top:289px;width:3px;height:1px;background:#7e7e7e;"></div>
<div class="a" style="left:220px;top:305px;width:3px;height:1px;background:#7e7e7e;"></div>
<div class="a" style="left:213px;top:321px;width:10px;height:1px;background:#8c8c8c;"></div>
<div class="a" style="left:220px;top:336px;width:3px;height:1px;background:#7e7e7e;"></div>
<div class="a" style="left:220px;top:352px;width:3px;height:1px;background:#7e7e7e;"></div>
<div class="a" style="left:220px;top:367px;width:3px;height:1px;background:#7e7e7e;"></div>
<div class="a" style="left:220px;top:383px;width:3px;height:1px;background:#7e7e7e;"></div>
<div class="t" style="left:217.5px;top:161.09px;font-size:5.8px;color:#9a9a9a;transform:rotate(-90deg);transform-origin:0 0">0</div>
<div class="t" style="left:218.2px;top:319.39px;font-size:5.8px;color:#9a9a9a;transform:rotate(-90deg);transform-origin:0 0">50</div>
<div class="a" style="left:263px;top:124px;width:1px;height:40px;background:#7bbf2a;"></div>
<div class="a" style="left:263px;top:165px;width:1px;height:232px;background:#8fae87;"></div>
<div class="a" style="left:223px;top:164px;width:40px;height:1px;background:#d9434d;"></div>
<div class="a" style="left:264px;top:164px;width:888px;height:1px;background:#b64fb2;"></div>
<div class="a" style="left:258px;top:162.5px;width:12px;height:4px;background:#f19ea2;"></div>
<div class="a" style="left:262px;top:158.5px;width:4px;height:12px;background:#f19ea2;"></div>
<div class="a" style="left:262.5px;top:163px;width:3px;height:3px;background:#ffd8da;"></div>
<div class="a" style="left:1148px;top:127px;width:3px;height:266px;background:#575757;border-radius:2px"></div>
<div class="a" style="left:1147.5px;top:192px;width:4px;height:79px;background:#8c8c8c;border-radius:2px"></div>
<div class="a" style="left:223px;top:393px;width:925px;height:3px;background:#575757;border-radius:2px"></div>
<div class="a" style="left:507px;top:392px;width:302px;height:4.5px;background:#8c8c8c;border-radius:2px"></div>
<svg style="left:232px;top:135px;" width="12" height="12" viewBox="0 0 12 12"><circle cx="5.8" cy="5.9" r="1.5" fill="#eeeeee"/><path d="M4.3 1.2 Q5.8 3.6 7.3 1.2 M4.3 10.6 Q5.8 8.2 7.3 10.6 M1.2 4.4 Q3.6 5.9 1.2 7.4 M10.4 4.4 Q8 5.9 10.4 7.4" fill="none" stroke="#eeeeee" stroke-width="1.2" stroke-linecap="round"/></svg>
<svg style="left:256px;top:135px;" width="12" height="12" viewBox="0 0 12 12"><path fill-rule="evenodd" d="M0.7 6 A5.3 5.3 0 1 0 11.3 6 A5.3 5.3 0 1 0 0.7 6 Z M3 5.1 H9 V6.9 H3 Z" fill="#e6e6e6"/></svg>
<div class="t" style="left:277.5px;top:136.31px;font-size:10.5px;color:#ececec;letter-spacing:-0.3px;text-shadow:0 0 1.5px #222,0 0 1px #222">313.8 %</div>
<svg style="left:323px;top:135px;" width="12" height="12" viewBox="0 0 12 12"><path fill-rule="evenodd" d="M0.7 6 A5.3 5.3 0 1 0 11.3 6 A5.3 5.3 0 1 0 0.7 6 Z M3 5.1 H5.1 V3 H6.9 V5.1 H9 V6.9 H6.9 V9 H5.1 V6.9 H3 Z" fill="#e6e6e6"/></svg>
<div class="a" style="left:212px;top:400px;width:942px;height:291px;background:#1d2029;"></div>
<div class="a" style="left:211px;top:400px;width:940px;height:291px;background:transparent;border:3px solid #ffa81c"></div>
<div class="t" style="left:218.4px;top:413.21px;font-size:10.5px;color:#d0d2d6;font-weight:bold;">Animations:</div>
<div class="t" style="left:419px;top:413.11px;font-size:10.5px;color:#d0d2d6;font-weight:bold;">Animation Frames:</div>
<svg style="left:220px;top:439px;" width="11" height="12" viewBox="0 0 11 12"><path d="M0.5 0.5 H6 L9.5 4 V11.5 H0.5 Z" fill="#dcdcdc"/><path d="M6 0.5 V4 H9.5" fill="#9a9a9a"/><circle cx="8.3" cy="9.3" r="2.8" fill="#1d2029"/><path d="M8.3 7.3 V11.3 M6.3 9.3 H10.3" stroke="#5fd35f" stroke-width="1.6"/></svg>
<svg style="left:243px;top:439px;" width="11" height="12" viewBox="0 0 11 12"><path d="M3.5 0.5 H8 L10.5 3 V9 H3.5 Z" fill="#dcdcdc"/><path d="M1.5 3 V11.5 H8" fill="none" stroke="#dcdcdc" stroke-width="1.4"/></svg>
<svg style="left:267px;top:439px;" width="12" height="12" viewBox="0 0 12 12"><path d="M0.5 2.2 H11.5 M4 2 V0.6 H8 V2" fill="none" stroke="#dcdcdc" stroke-width="1.5"/><path d="M1.8 4 V10.2 Q1.8 11.5 3 11.5 H9 Q10.2 11.5 10.2 10.2 V4" fill="none" stroke="#dcdcdc" stroke-width="1.5"/><path d="M4.6 4 V10 M7.4 4 V10" stroke="#dcdcdc" stroke-width="1.5"/></svg>
<div class="a" style="left:288px;top:433px;width:1px;height:24px;background:#2c3038;"></div>
<svg style="left:298px;top:439px;" width="12" height="11" viewBox="0 0 12 11"><path d="M1 1 H8 L11 5.5 L8 10 H1 Z" fill="none" stroke="#dcdcdc" stroke-width="1.4"/><path d="M3 8 L4.8 3 L6.6 8 M3.6 6.5 H6" fill="none" stroke="#dcdcdc" stroke-width="1.1"/></svg>
<div class="a" style="left:319px;top:433px;width:1px;height:24px;background:#2c3038;"></div>
<div class="a" style="left:325px;top:433px;width:21px;height:24px;background:#141821;border-radius:3px"></div>
<svg style="left:329px;top:439px;" width="12" height="12" viewBox="0 0 12 12"><path d="M2 6.5 A4 4 0 0 1 8.5 2.5 M10 5.5 A4 4 0 0 1 3.5 9.5" fill="none" stroke="#5aaaf0" stroke-width="1.8"/><path d="M7 0 L10.5 2.2 L7.5 5 Z M5 12 L1.5 9.8 L4.5 7 Z" fill="#5aaaf0"/></svg>
<div class="a" style="left:349px;top:433px;width:46px;height:24px;background:#131519;border-radius:2px"></div>
<div class="t" style="left:353px;top:439.11px;font-size:10.5px;color:#dcdde0;letter-spacing:-0.65px">5.0 FPS</div>
<svg style="left:400px;top:436px;" width="10" height="18" viewBox="0 0 10 18"><path d="M1 5.5 L5 1.5 L9 5.5" fill="none" stroke="#8d9096" stroke-width="1.2"/><path d="M1 12.5 L5 16.5 L9 12.5" fill="none" stroke="#5d6066" stroke-width="1.2"/></svg>
<div class="a" style="left:215px;top:460px;width:198px;height:24px;background:#131519;border-radius:2px"></div>
<div class="t" style="left:219.3px;top:465.91px;font-size:10.5px;color:#b4b6bb;">Filter Animations</div>
<svg style="left:396.5px;top:467px;" width="11" height="11" viewBox="0 0 11 11"><circle cx="4.5" cy="4.5" r="3.3" fill="none" stroke="#d8d8d8" stroke-width="1.6"/><path d="M7 7 L10 10" stroke="#d8d8d8" stroke-width="1.8" stroke-linecap="round"/></svg>
<div class="a" style="left:215px;top:487px;width:198px;height:201px;background:#131519;border-radius:2px"></div>
<div class="a" style="left:227px;top:490px;width:183px;height:23px;background:#2b3e54;border-radius:3px"></div>
<div class="t" style="left:230.5px;top:495.41px;font-size:10.5px;color:#e6e8ec;">default</div>
<div class="a" style="left:416px;top:460px;width:732px;height:228px;background:#16181d;"></div>
<svg style="left:421.6px;top:440.7px;" width="9" height="9" viewBox="0 0 9 9"><path d="M8 0.5 L1 4.5 L8 8.5 Z" fill="#dcdcdc"/></svg>
<svg style="left:445.6px;top:440.7px;" width="11" height="9" viewBox="0 0 11 9"><path d="M7 0.5 L0.5 4.5 L7 8.5 Z" fill="#dcdcdc"/><rect x="8" y="0.5" width="2.2" height="8" fill="#dcdcdc"/></svg>
<svg style="left:469.6px;top:440.7px;" width="9" height="9" viewBox="0 0 9 9"><rect x="0.5" y="0.5" width="8" height="8" rx="1" fill="#dcdcdc"/></svg>
<svg style="left:492.6px;top:440.7px;" width="11" height="9" viewBox="0 0 11 9"><rect x="0.5" y="0.5" width="2.2" height="8" fill="#dcdcdc"/><path d="M4 0.5 L10.5 4.5 L4 8.5 Z" fill="#dcdcdc"/></svg>
<svg style="left:517.6px;top:440.7px;" width="9" height="9" viewBox="0 0 9 9"><path d="M1 0.5 L8 4.5 L1 8.5 Z" fill="#dcdcdc"/></svg>
<div class="a" style="left:537px;top:433px;width:1px;height:24px;background:#2c3038;"></div>
<svg style="left:546.6px;top:439.7px;" width="12" height="11" viewBox="0 0 12 11"><path d="M0.5 1 H4.5 L5.5 2.5 H10 V4 H3 L0.5 10 Z" fill="#dcdcdc"/><path d="M3 4.5 H11.5 L9.5 10.5 H0.5 Z" fill="#dcdcdc"/></svg>
<svg style="left:571.6px;top:439.7px;" width="12" height="12" viewBox="0 0 12 12"><rect x="0.7" y="0.7" width="10.6" height="10.6" rx="1.5" fill="none" stroke="#dcdcdc" stroke-width="1.4"/><path d="M4.2 0.7 V11.3 M7.8 0.7 V11.3 M0.7 4.2 H11.3 M0.7 7.8 H11.3" stroke="#dcdcdc" stroke-width="1.2"/></svg>
<div class="a" style="left:592px;top:433px;width:1px;height:24px;background:#2c3038;"></div>
<svg style="left:602.6px;top:439.7px;" width="12" height="12" viewBox="0 0 12 12"><rect x="3.5" y="3.5" width="7.5" height="7.5" rx="1" fill="none" stroke="#dcdcdc" stroke-width="1.5"/><path d="M1 8 V1 H8" fill="none" stroke="#dcdcdc" stroke-width="1.5"/></svg>
<svg style="left:626.6px;top:439.7px;" width="12" height="12" viewBox="0 0 12 12"><rect x="1" y="2" width="10" height="9.5" rx="1" fill="none" stroke="#dcdcdc" stroke-width="1.5"/><rect x="3.5" y="0.5" width="5" height="3" rx=".5" fill="#dcdcdc"/></svg>
<div class="a" style="left:647px;top:433px;width:1px;height:24px;background:#2c3038;"></div>
<svg style="left:657.6px;top:439.7px;" width="12" height="12" viewBox="0 0 12 12"><path d="M0.5 2.5 L3 0.5 V4.5 Z" fill="#dcdcdc"/><rect x="6" y="0" width="5" height="5" rx="1" fill="#dcdcdc"/><path d="M8.5 6 V11.5 M5.8 8.7 H11.2" stroke="#4ccf5a" stroke-width="1.8"/></svg>
<svg style="left:681.6px;top:439.7px;" width="12" height="12" viewBox="0 0 12 12"><rect x="0.5" y="0" width="5" height="5" rx="1" fill="#dcdcdc"/><path d="M11.5 2.5 L9 0.5 V4.5 Z" fill="#dcdcdc"/><path d="M6.5 6 V11.5 M3.8 8.7 H9.2" stroke="#4ccf5a" stroke-width="1.8"/></svg>
<div class="a" style="left:702px;top:433px;width:1px;height:24px;background:#2c3038;"></div>
<svg style="left:711.6px;top:439.7px;" width="12" height="11" viewBox="0 0 12 11"><path d="M1 5.5 H8 M4.5 2 L1 5.5 L4.5 9" fill="none" stroke="#dcdcdc" stroke-width="1.6"/><rect x="9.5" y="3.5" width="1.6" height="4" fill="#dcdcdc"/></svg>
<svg style="left:735.6px;top:439.7px;" width="12" height="11" viewBox="0 0 12 11"><path d="M4 5.5 H11 M7.5 2 L11 5.5 L7.5 9" fill="none" stroke="#dcdcdc" stroke-width="1.6"/><rect x="0.9" y="3.5" width="1.6" height="4" fill="#dcdcdc"/></svg>
<svg style="left:759.6px;top:439.7px;" width="12" height="12" viewBox="0 0 12 12"><path d="M0.5 2.2 H11.5 M4 2 V0.6 H8 V2" fill="none" stroke="#dcdcdc" stroke-width="1.5"/><path d="M1.8 4 V10.2 Q1.8 11.5 3 11.5 H9 Q10.2 11.5 10.2 10.2 V4" fill="none" stroke="#dcdcdc" stroke-width="1.5"/><path d="M4.6 4 V10 M7.4 4 V10" stroke="#dcdcdc" stroke-width="1.5"/></svg>
<div class="a" style="left:781px;top:433px;width:1px;height:24px;background:#2c3038;"></div>
<div class="t" style="left:790.3px;top:438.91px;font-size:10.5px;color:#dcdde0;">Frame Duration:</div>
<div class="a" style="left:873px;top:433px;width:46px;height:24px;background:#131519;border-radius:2px"></div>
<div class="t" style="left:877.4px;top:439.11px;font-size:10.5px;color:#dcdde0;">× 1.0</div>
<svg style="left:924px;top:435px;" width="10" height="19" viewBox="0 0 10 19"><path d="M1 6 L5 2 L9 6" fill="none" stroke="#8d9096" stroke-width="1.2"/><path d="M1 13.5 L5 17.5 L9 13.5" fill="none" stroke="#5d6066" stroke-width="1.2"/></svg>
<svg style="left:1086px;top:439px;" width="12" height="12" viewBox="0 0 12 12"><circle cx="6" cy="6" r="5.3" fill="#e6e6e6"/><rect x="3" y="5.2" width="6" height="1.8" fill="#1d2029"/></svg>
<svg style="left:1110px;top:439px;" width="12" height="12" viewBox="0 0 12 12"><circle cx="6" cy="6" r="5.3" fill="#e6e6e6"/><path d="M4.3 4.3 L6.3 3 V9.3" fill="none" stroke="#1d2029" stroke-width="1.7"/></svg>
<svg style="left:1134px;top:439px;" width="12" height="12" viewBox="0 0 12 12"><circle cx="6" cy="6" r="5.3" fill="#e6e6e6"/><rect x="3" y="5.2" width="6" height="1.8" fill="#1d2029"/><rect x="5.1" y="3" width="1.8" height="6" fill="#1d2029"/></svg>
<div class="a" style="left:212px;top:691px;width:942px;height:29px;background:#1d2029;"></div>
<div class="t" style="left:219.6px;top:700.51px;font-size:10.5px;color:#dcdde0;">Output</div>
<div class="t" style="left:265.6px;top:700.51px;font-size:10.5px;color:#dcdde0;">Debugger</div>
<div class="t" style="left:325.6px;top:700.51px;font-size:10.5px;color:#dcdde0;">Audio</div>
<div class="t" style="left:365.5px;top:700.51px;font-size:10.5px;color:#dcdde0;">Animation</div>
<div class="t" style="left:426.4px;top:700.51px;font-size:10.5px;color:#dcdde0;">Shader Editor</div>
<div class="t" style="left:502.5px;top:700.51px;font-size:10.5px;color:#6cb0ec;">SpriteFrames</div>
<svg style="left:1027px;top:700px;" width="11" height="12" viewBox="0 0 11 12"><path d="M5.5 0.5 Q9.5 0.5 9.5 5 V8 L10.5 9.5 H0.5 L1.5 8 V5 Q1.5 0.5 5.5 0.5 Z M4 10.5 H7 Q6.5 11.5 5.5 11.5 Q4.5 11.5 4 10.5" fill="#55585d"/></svg>
<div class="t" style="left:1046.2px;top:699.51px;font-size:10.5px;color:#8d9096;">4.4.1.stable</div>
<svg style="left:1111px;top:699px;" width="10" height="12" viewBox="0 0 10 12"><path d="M1 0.5 H9 M2.5 0.5 V5 H7.5 V0.5 M0.5 6 H9.5 M5 6 V11.5" fill="none" stroke="#dcdcdc" stroke-width="1.5"/><rect x="2.5" y="1" width="5" height="4.5" fill="#dcdcdc"/></svg>
<svg style="left:1133px;top:699px;" width="13" height="12" viewBox="0 0 13 12"><path d="M0.5 1 H12.5" stroke="#dcdcdc" stroke-width="1.5"/><path d="M3.5 3 L0.8 6 H2.7 V11.5 H4.3 V6 H6.2 Z M9.5 3 L6.8 6 H8.7 V11.5 H10.3 V6 H12.2 Z" fill="#dcdcdc"/></svg>
<div class="a" style="left:1157px;top:62px;width:201px;height:21px;background:#15171c;"></div>
<div class="a" style="left:1157px;top:62px;width:61px;height:21px;background:#1d2029;"></div>
<div class="a" style="left:1157px;top:62px;width:61px;height:2px;background:#5e9bd2;"></div>
<div class="t" style="left:1164.6px;top:67.11px;font-size:10.5px;color:#dcdde0;">Inspector</div>
<div class="t" style="left:1226.2px;top:67.11px;font-size:10.5px;color:#84878c;">Node</div>
<div class="t" style="left:1268.4px;top:67.11px;font-size:10.5px;color:#84878c;">History</div>
<svg style="left:1349px;top:64.6px;" width="6" height="14.8" viewBox="0 0 6 14.8"><circle cx="3" cy="3.0" r="1.5" fill="#7c7f85"/><circle cx="3" cy="7.4" r="1.5" fill="#7c7f85"/><circle cx="3" cy="11.8" r="1.5" fill="#7c7f85"/></svg>
<div class="a" style="left:1157px;top:83px;width:201px;height:637px;background:#1d2029;"></div>
<svg style="left:1165px;top:91px;" width="11" height="12" viewBox="0 0 11 12"><path d="M0.5 0.5 H6 L9.5 4 V11.5 H0.5 Z" fill="#dcdcdc"/><path d="M6 0.5 V4 H9.5" fill="#9a9a9a"/><circle cx="8.3" cy="9.3" r="2.8" fill="#1d2029"/><path d="M8.3 7.3 V11.3 M6.3 9.3 H10.3" stroke="#5fd35f" stroke-width="1.6"/></svg>
<svg style="left:1188px;top:92px;" width="12" height="11" viewBox="0 0 12 11"><path d="M0.5 1 H4.5 L5.5 2.5 H10 V4 H3 L0.5 10 Z" fill="#dcdcdc"/><path d="M3 4.5 H11.5 L9.5 10.5 H0.5 Z" fill="#dcdcdc"/></svg>
<svg style="left:1212px;top:92px;" width="11" height="11" viewBox="0 0 11 11"><path d="M0.5 1.5 Q0.5 0.5 1.5 0.5 H8.5 L10.5 2.5 V9.5 Q10.5 10.5 9.5 10.5 H1.5 Q0.5 10.5 0.5 9.5 Z" fill="#86888c"/><rect x="2.5" y="1.8" width="5.5" height="2.6" fill="#1d2029"/><circle cx="5.5" cy="7.4" r="1.4" fill="#1d2029"/></svg>
<svg style="left:1239px;top:89.2px;" width="6" height="15.6" viewBox="0 0 6 15.6"><circle cx="3" cy="3.0" r="1.6" fill="#e8e8e8"/><circle cx="3" cy="7.8" r="1.6" fill="#e8e8e8"/><circle cx="3" cy="12.6" r="1.6" fill="#e8e8e8"/></svg>
<svg style="left:1302px;top:92px;" width="6" height="10" viewBox="0 0 6 10"><path d="M4.5 1 L1.5 5 L4.5 9" fill="none" stroke="#e0e0e0" stroke-width="1.4"/></svg>
<svg style="left:1320px;top:92px;" width="6" height="10" viewBox="0 0 6 10"><path d="M1.5 1 L4.5 5 L1.5 9" fill="none" stroke="#74777c" stroke-width="1.4"/></svg>
<svg style="left:1338px;top:91px;" width="12" height="12" viewBox="0 0 12 12"><path d="M3 3 A4.5 4.5 0 1 1 2 7.5" fill="none" stroke="#e0e0e0" stroke-width="1.5"/><path d="M0 2 L4.5 1.5 L4 6 Z" fill="#e0e0e0"/><path d="M6.5 4 V6.5 L8.5 8" fill="none" stroke="#e0e0e0" stroke-width="1.3"/></svg>
<div class="a" style="left:1160px;top:110px;width:171px;height:24px;background:#131519;border-radius:2px"></div>
<svg style="left:1163.5px;top:116px;" width="12" height="12" viewBox="0 0 12 12"><rect x="3" y="0" width="8.5" height="9" rx="2" fill="#6f80c4"/><rect x="0.5" y="2.3" width="9.2" height="9.2" rx="2.2" fill="#8da5f3"/><rect x="1.8" y="6" width="1.3" height="1.8" fill="#1d2029"/><rect x="6.9" y="6" width="1.3" height="1.8" fill="#1d2029"/><path d="M3.2 8.6 Q5 10.6 6.8 8.6 Z" fill="#1d2029"/></svg>
<div class="t" style="left:1181.3px;top:116.01px;font-size:10.5px;color:#dcdde0;">AnimatedSprite2D</div>
<svg style="left:1318.0px;top:118.5px;" width="9" height="6" viewBox="0 0 9 6"><path d="M1 1.5 L4.5 5.0 L8 1.5" fill="none" stroke="#e0e0e0" stroke-width="1.5"/></svg>
<svg style="left:1337px;top:115px;" width="13" height="13" viewBox="0 0 13 13"><circle cx="7.4" cy="4" r="2.6" fill="none" stroke="#e0e0e0" stroke-width="1.4"/><path d="M5.6 5.9 L3.9 7.6" stroke="#e0e0e0" stroke-width="1.5"/><text x="6.2" y="12.6" font-size="5.4" font-weight="bold" text-anchor="middle" fill="#e0e0e0" font-family="Liberation Sans" letter-spacing="-0.2">DOC</text></svg>
<div class="a" style="left:1160px;top:137px;width:171px;height:24px;background:#131519;border-radius:2px"></div>
<div class="t" style="left:1164.6px;top:142.81px;font-size:10.5px;color:#b4b6bb;">Filter Properties</div>
<svg style="left:1314.5px;top:143px;" width="11" height="11" viewBox="0 0 11 11"><circle cx="4.5" cy="4.5" r="3.3" fill="none" stroke="#d8d8d8" stroke-width="1.6"/><path d="M7 7 L10 10" stroke="#d8d8d8" stroke-width="1.8" stroke-linecap="round"/></svg>
<svg style="left:1339px;top:143px;" width="11" height="12" viewBox="0 0 11 12"><path d="M2.6 0.5 V6" stroke="#e0e0e0" stroke-width="1.3"/><rect x="1" y="6" width="3.2" height="5.5" rx="1" fill="#e0e0e0"/><path d="M6.6 0.5 V2.6 Q6.6 4.8 8.4 4.8 Q10.2 4.8 10.2 2.6 V0.5" fill="none" stroke="#e0e0e0" stroke-width="1.3"/><path d="M8.4 4.5 V11.5" stroke="#e0e0e0" stroke-width="1.5"/></svg>
<div class="a" style="left:1160px;top:164px;width:195px;height:552px;background:#131519;border-radius:3px"></div>
<div class="a" style="left:1163px;top:167px;width:189px;height:20px;background:#313237;border-radius:1.5px"></div>
<svg style="left:1203.5px;top:171px;" width="12" height="12" viewBox="0 0 12 12"><rect x="3" y="0" width="8.5" height="9" rx="2" fill="#6f80c4"/><rect x="0.5" y="2.3" width="9.2" height="9.2" rx="2.2" fill="#8da5f3"/><rect x="1.8" y="6" width="1.3" height="1.8" fill="#1d2029"/><rect x="6.9" y="6" width="1.3" height="1.8" fill="#1d2029"/><path d="M3.2 8.6 Q5 10.6 6.8 8.6 Z" fill="#1d2029"/></svg>
<div class="t" style="left:1219px;top:171.41px;font-size:10.5px;color:#e2e3e6;font-weight:bold;">AnimatedSprite2D</div>
<div class="a" style="left:1163px;top:187px;width:189px;height:20px;background:#1a1b20;"></div>
<div class="a" style="left:1163px;top:338px;width:189px;height:260px;background:#1a1b20;"></div>
<svg style="left:1166.0px;top:193.5px;" width="7" height="6" viewBox="0 0 7 6"><path d="M1 1.5 L3.5 4.0 L6 1.5" fill="none" stroke="#9a9da2" stroke-width="1.1"/></svg>
<div class="t" style="left:1175.3px;top:191.21px;font-size:10.5px;color:#e2e3e6;font-weight:bold;">Animation</div>
<div class="a" style="left:1172px;top:207px;width:89px;height:24px;background:#3d6790;"></div>
<div class="t" style="left:1178px;top:211.51px;font-size:10.5px;color:#e8eef5;letter-spacing:-0.15px">Sprite Frames</div>
<svg style="left:1244px;top:214px;" width="11" height="10" viewBox="0 0 11 10"><path d="M3 3 A3.5 3.5 0 1 1 2.5 7.5" fill="none" stroke="#e0e6ee" stroke-width="1.3"/><path d="M0.5 1.5 L4.2 1.8 L2.5 5 Z" fill="#e0e6ee"/></svg>
<div class="a" style="left:1261px;top:207px;width:91px;height:24px;background:#121419;"></div>
<svg style="left:1266px;top:214px;" width="12" height="10" viewBox="0 0 12 10"><rect x="2" y="1" width="7" height="7" rx="1.5" fill="#6fb3f0"/><rect x="3.5" y="3" width="1.3" height="1.8" fill="#121419"/><rect x="6.2" y="3" width="1.3" height="1.8" fill="#121419"/><path d="M10.5 0.5 V9.5 M0.5 0.5 V9.5" stroke="#6fb3f0" stroke-width="1" stroke-dasharray="1.2 1.2"/></svg>
<div class="t" style="left:1281.4px;top:213.61px;font-size:10.5px;color:#77b6ef;letter-spacing:-0.15px">SpriteFra</div>
<div class="a" style="left:1261px;top:205px;width:73px;height:27px;background:transparent;border:3px solid #ffa81c"></div>
<svg style="left:1337.0px;top:216.5px;" width="9" height="6" viewBox="0 0 9 6"><path d="M1 1.5 L4.5 5.0 L8 1.5" fill="none" stroke="#e0e0e0" stroke-width="1.4"/></svg>
<div class="a" style="left:1172px;top:231px;width:180px;height:26px;background:#1c2029;border:1px solid #3b5878"></div>
<svg style="left:1177px;top:239.5px;" width="6" height="8" viewBox="0 0 6 8"><path d="M1.5 1 L4.5 4.0 L1.5 7" fill="none" stroke="#9a9da2" stroke-width="1.1"/></svg>
<div class="t" style="left:1187.2px;top:237.21px;font-size:10.5px;color:#e2e3e6;font-weight:bold;letter-spacing:-0.35px">Resource</div>
<div class="t" style="left:1178px;top:264.41px;font-size:10.5px;color:#b9bbc0;">Animation</div>
<div class="a" style="left:1262px;top:261px;width:90px;height:22px;background:#131519;"></div>
<div class="t" style="left:1266.9px;top:266.51px;font-size:10.5px;color:#dcdde0;">default</div>
<svg style="left:1340.0px;top:267.5px;" width="9" height="6" viewBox="0 0 9 6"><path d="M1 1.5 L4.5 5.0 L8 1.5" fill="none" stroke="#e0e0e0" stroke-width="1.4"/></svg>
<div class="t" style="left:1178px;top:291.61px;font-size:10.5px;color:#b9bbc0;">Frame</div>
<div class="a" style="left:1262px;top:288px;width:90px;height:23px;background:#131519;"></div>
<div class="t" style="left:1273.9px;top:293.11px;font-size:10.5px;color:#dcdde0;">0</div>
<svg style="left:1336px;top:292px;" width="10" height="13" viewBox="0 0 10 13"><path d="M1 4.5 L5 1 L9 4.5 M1 8.5 L5 12 L9 8.5" fill="none" stroke="#e0e0e0" stroke-width="1.3"/></svg>
<div class="t" style="left:1178px;top:318.81px;font-size:10.5px;color:#b9bbc0;letter-spacing:-0.4px">Speed Scale</div>
<div class="a" style="left:1262px;top:315px;width:90px;height:23px;background:#131519;"></div>
<div class="t" style="left:1274.5px;top:320.11px;font-size:10.5px;color:#dcdde0;">1.0</div>
<svg style="left:1167px;top:344.4px;" width="6" height="7" viewBox="0 0 6 7"><path d="M1.5 1 L4.0 3.5 L1.5 6" fill="none" stroke="#9a9da2" stroke-width="1.1"/></svg>
<div class="t" style="left:1175.2px;top:342.01px;font-size:10.5px;color:#e2e3e6;font-weight:bold;">Offset</div>
<div class="a" style="left:1163px;top:358px;width:189px;height:20px;background:#313237;border-radius:1.5px"></div>
<svg style="left:1230px;top:362px;" width="11" height="11" viewBox="0 0 11 11"><circle cx="5.5" cy="5.5" r="4.2" fill="none" stroke="#8da5f3" stroke-width="1.6"/></svg>
<div class="t" style="left:1245px;top:362.31px;font-size:10.5px;color:#e2e3e6;font-weight:bold;">Node2D</div>
<svg style="left:1167px;top:384.0px;" width="6" height="7" viewBox="0 0 6 7"><path d="M1.5 1 L4.0 3.5 L1.5 6" fill="none" stroke="#9a9da2" stroke-width="1.1"/></svg>
<div class="t" style="left:1175.2px;top:381.61px;font-size:10.5px;color:#e2e3e6;font-weight:bold;">Transform</div>
<div class="a" style="left:1163px;top:398px;width:189px;height:20px;background:#313237;border-radius:1.5px"></div>
<svg style="left:1220px;top:402px;" width="11" height="11" viewBox="0 0 11 11"><path d="M1 10 L2 7 L8 1 L10 3 L4 9 Z" fill="#a0a0a0"/></svg>
<div class="t" style="left:1235px;top:402.31px;font-size:10.5px;color:#e2e3e6;font-weight:bold;">CanvasItem</div>
<svg style="left:1167px;top:423.9px;" width="6" height="7" viewBox="0 0 6 7"><path d="M1.5 1 L4.0 3.5 L1.5 6" fill="none" stroke="#9a9da2" stroke-width="1.1"/></svg>
<div class="t" style="left:1175.2px;top:421.51px;font-size:10.5px;color:#e2e3e6;font-weight:bold;">Visibility</div>
<svg style="left:1167px;top:443.9px;" width="6" height="7" viewBox="0 0 6 7"><path d="M1.5 1 L4.0 3.5 L1.5 6" fill="none" stroke="#9a9da2" stroke-width="1.1"/></svg>
<div class="t" style="left:1175.2px;top:441.51px;font-size:10.5px;color:#e2e3e6;font-weight:bold;">Ordering</div>
<svg style="left:1167px;top:463.8px;" width="6" height="7" viewBox="0 0 6 7"><path d="M1.5 1 L4.0 3.5 L1.5 6" fill="none" stroke="#9a9da2" stroke-width="1.1"/></svg>
<div class="t" style="left:1175.2px;top:461.41px;font-size:10.5px;color:#e2e3e6;font-weight:bold;">Texture</div>
<svg style="left:1167px;top:483.7px;" width="6" height="7" viewBox="0 0 6 7"><path d="M1.5 1 L4.0 3.5 L1.5 6" fill="none" stroke="#9a9da2" stroke-width="1.1"/></svg>
<div class="t" style="left:1175.2px;top:481.31px;font-size:10.5px;color:#e2e3e6;font-weight:bold;">Material</div>
<div class="a" style="left:1163px;top:498px;width:189px;height:20px;background:#313237;border-radius:1.5px"></div>
<svg style="left:1237px;top:503px;" width="11" height="11" viewBox="0 0 11 11"><circle cx="5.5" cy="5.5" r="4.2" fill="none" stroke="#e0e0e0" stroke-width="1.6"/></svg>
<div class="t" style="left:1252.5px;top:502.31px;font-size:10.5px;color:#e2e3e6;font-weight:bold;">Node</div>
<svg style="left:1167px;top:523.6px;" width="6" height="7" viewBox="0 0 6 7"><path d="M1.5 1 L4.0 3.5 L1.5 6" fill="none" stroke="#9a9da2" stroke-width="1.1"/></svg>
<div class="t" style="left:1175.2px;top:521.21px;font-size:10.5px;color:#e2e3e6;font-weight:bold;">Process</div>
<svg style="left:1167px;top:543.9px;" width="6" height="7" viewBox="0 0 6 7"><path d="M1.5 1 L4.0 3.5 L1.5 6" fill="none" stroke="#9a9da2" stroke-width="1.1"/></svg>
<div class="t" style="left:1175.2px;top:541.51px;font-size:10.5px;color:#e2e3e6;font-weight:bold;">Physics Interpolation</div>
<svg style="left:1167px;top:563.8px;" width="6" height="7" viewBox="0 0 6 7"><path d="M1.5 1 L4.0 3.5 L1.5 6" fill="none" stroke="#9a9da2" stroke-width="1.1"/></svg>
<div class="t" style="left:1175.2px;top:561.41px;font-size:10.5px;color:#e2e3e6;font-weight:bold;">Auto Translate</div>
<svg style="left:1167px;top:584.1px;" width="6" height="7" viewBox="0 0 6 7"><path d="M1.5 1 L4.0 3.5 L1.5 6" fill="none" stroke="#9a9da2" stroke-width="1.1"/></svg>
<div class="t" style="left:1175.2px;top:581.71px;font-size:10.5px;color:#e2e3e6;font-weight:bold;">Editor Description</div>
<div class="t" style="left:1169px;top:603.11px;font-size:10.5px;color:#b9bbc0;">Script</div>
<div class="t" style="left:1274px;top:604.61px;font-size:10.5px;color:#dcdde0;">&lt;empty&gt;</div>
<div class="a" style="left:1333px;top:599px;width:18px;height:22px;background:#15171c;"></div>
<svg style="left:1337.2px;top:607.7px;" width="9" height="6" viewBox="0 0 9 6"><path d="M1 1.5 L4.5 5.0 L8 1.5" fill="none" stroke="#e0e0e0" stroke-width="1.4"/></svg>
<div class="a" style="left:1191px;top:625px;width:131px;height:24px;background:#24262b;border-radius:1px"></div>
<svg style="left:1195px;top:631px;" width="12" height="12" viewBox="0 0 12 12"><path d="M0.8 6 H10.8 M5.8 1 V11" stroke="#e0e0e0" stroke-width="1.9"/></svg>
<div class="t" style="left:1231.5px;top:632.41px;font-size:10.5px;color:#dcdde0;">Add Metadata</div>
</body></html>
